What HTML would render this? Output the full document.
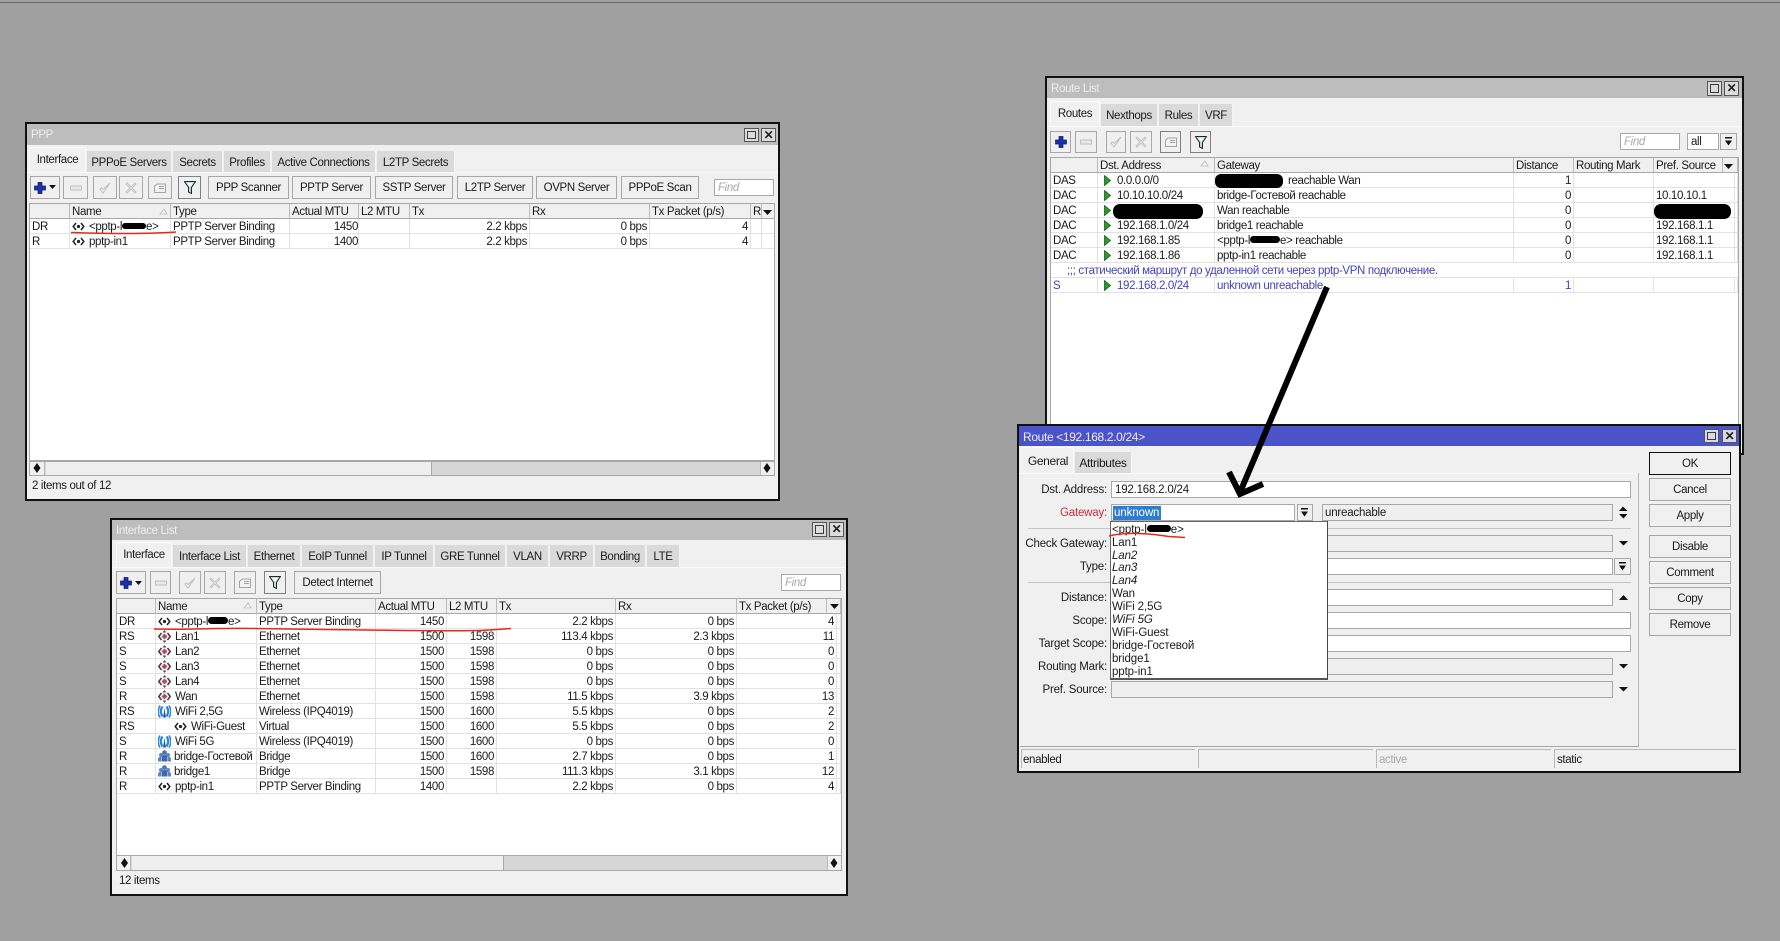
<!DOCTYPE html>
<html lang="en"><head><meta charset="utf-8"><title>MikroTik WinBox</title>
<style>
html,body{margin:0;padding:0;background:#a0a0a0}
#r{position:relative;width:1780px;height:941px;overflow:hidden;background:#a0a0a0;font:11.5px/15px "Liberation Sans","Noto Sans CJK SC",sans-serif;letter-spacing:-.35px;color:#1a1a1a;filter:blur(.3px)}
#r div,#r table{position:absolute;box-sizing:border-box}
.w{background:#f0f0f0;border:2px solid #111}
.tt{background:#bdbdbd;color:#eee;padding-left:4px;line-height:23px}
.tl{white-space:nowrap}
.tb{background:#dadada;text-align:center;white-space:nowrap;line-height:24px;border-right:1px solid #f4f4f4}
.tb.on{background:#f0f0f0;border:1px solid #fafafa;border-bottom:0;line-height:25px}
.b{border:1px solid #a8a8a8;background:#f0f0f0;display:flex;align-items:center;justify-content:center;white-space:nowrap;padding-top:2px}
.b svg{position:relative;top:-1px}
.b.d{border-color:#808080}
.i{border:1px solid #a8a8a8;background:#fff;padding-left:3px;line-height:17px;white-space:nowrap}
.i.g{background:#efefef}
.f{color:#aaa;font-style:italic}
.wb{background:#dcdcdc;border:1px solid #555}
.wb div{border:1.5px solid #3a3a3a}
.l{width:120px;text-align:right;left:987px;white-space:nowrap;letter-spacing:-.2px}
.dd{left:1112px;white-space:nowrap;letter-spacing:-.1px}
.ln{background:#c4c4c4;height:1px}
.fr{background:transparent;border:1px solid #a8a8a8}
table{table-layout:fixed;border-collapse:separate;border-spacing:0;background:#fff}
td,th{box-sizing:border-box;height:15px;padding:3px 2px 0;border-right:1px solid #e2e2e2;border-bottom:1px solid #e2e2e2;font-weight:normal;text-align:left;white-space:nowrap;overflow:hidden;line-height:11px}
td:first-child{padding-left:3px}
th{height:16px;padding-top:3px;background:#f0f0f0;border-right:1px solid #bcbcbc;border-top:1px solid #a8a8a8;border-bottom:1px solid #a8a8a8;line-height:11px}
td.r{text-align:right;padding-right:2px}
td.m{padding-right:0}
.u td{color:#4343bb}
.k{display:inline-block;background:#000;border-radius:4px;height:7px;vertical-align:middle;margin-top:-2px}
svg.n{display:inline-block;vertical-align:5px;margin:-6px 4px -6px 0}
svg.e{vertical-align:3px}
svg.q{vertical-align:4px;margin-right:3px}
svg.g{vertical-align:4px;margin:-6px 6px -6px 4px}
</style></head><body>
<svg width="0" height="0" style="position:absolute"><defs>
<symbol id="plus" viewBox="0 0 12 12"><path d="M4 .5h4v3.500h3.500v4H8v3.500H4V8H.5V4H4z" fill="#1c30a8" stroke="#0c1a6a" stroke-width=".7"/></symbol>
<symbol id="minus" viewBox="0 0 12 12"><rect x=".5" y="4" width="11" height="4" fill="#e8e8e8" stroke="#c0c0c0"/></symbol>
<symbol id="check" viewBox="0 0 12 12"><path d="M1 7l3 4L11 1 4.200 7.500 2.500 5.800z" fill="#f6f6f6" stroke="#c0c0c0"/></symbol>
<symbol id="xx" viewBox="0 0 12 12"><path d="M2 1l4 4 4-4 1 1-4 4 4 4-1 1-4-4-4 4-1-1 4-4-4-4z" fill="#f6f6f6" stroke="#c0c0c0" stroke-width=".9"/></symbol>
<symbol id="note" viewBox="0 0 12 10"><path d="M.5 3.500L3 1h8.500v8.500H.5z" fill="#f2f2f2" stroke="#a4a4a4"/><path d="M5 3.500h5M5 5.500h5" stroke="#a4a4a4"/></symbol>
<symbol id="filt" viewBox="0 0 12 13"><path d="M.5.500h11L7.500 6.500v6l-3-1.500V6.500z" fill="#bfd6da" stroke="#1e2a2e" stroke-width="1"/><path d="M3 2h6L6.500 5.500h-1z" fill="#f6fbfb"/></symbol>
<symbol id="if" viewBox="0 0 13 9"><path d="M4 1L1.200 4.500 4 8M9 1l2.800 3.500L9 8" fill="none" stroke="#222" stroke-width="1.500"/><circle cx="6.500" cy="4.500" r="1.600" fill="#222"/></symbol>
<symbol id="eth" viewBox="0 0 13 13"><path d="M6.500 0l2 2.500h-4zM6.500 13l-2-2.500h4z" fill="#555"/><path d="M3.500 3L.8 6.500 3.500 10M9.500 3l2.700 3.500L9.500 10" fill="none" stroke="#4e3a42" stroke-width="1.600"/><path d="M6.500 3.500l3 3-3 3-3-3z" fill="#b44a68"/></symbol>
<symbol id="wifi" viewBox="0 0 13 13"><path d="M4.500 1.500C2.300 4.500 2.300 8 4.500 11.500M8.500 1.500c2.200 3 2.200 6.500 0 10" fill="none" stroke="#2a86d6" stroke-width="2.200"/><path d="M2 .5C-.4 4.500-.4 8.500 2 12.500M11 .5c2.400 4 2.400 8 0 12" fill="none" stroke="#2a86d6" stroke-width="1.600"/><path d="M6.500 3l1.400 9.500H5.100z" fill="#27559a"/></symbol>
<symbol id="br" viewBox="0 0 13 12"><circle cx="6.500" cy="2.600" r="2.400" fill="#4a74b4"/><circle cx="3" cy="5" r="2" fill="#5c86c4"/><circle cx="10" cy="5" r="2" fill="#5c86c4"/><path d="M3.500 11.500V7.500c0-1.500 1.500-2.500 3-2.500s3 1 3 2.500v4z" fill="#3f69aa"/><path d="M0 11.500V9c0-1.500 1.200-2.300 3-2.300V11.500zM13 11.500V9c0-1.500-1.200-2.300-3-2.300V11.500z" fill="#5c86c4"/></symbol>
<symbol id="ga" viewBox="0 0 7 11"><path d="M.5.500l6 5-6 5z" fill="#2f9a30" stroke="#1b5a20" stroke-width=".8"/></symbol>
</defs></svg>
<div id="r">
<div style="left:0;top:2px;width:1780px;height:1px;background:#666"></div>

<!-- PPP -->
<div class="w" style="left:25px;top:122px;width:755px;height:379px"></div>
<div class="tt" style="left:27px;top:124px;width:751px;height:21px">PPP</div>
<div class="wb" style="left:744px;top:128px;width:15px;height:14px"><div style="left:2px;top:2px;width:9px;height:8px"></div></div>
<div class="wb" style="left:761px;top:128px;width:15px;height:14px;text-align:center;line-height:12px;font-weight:bold;color:#222;font-size:12px">✕</div>
<div class="tb" style="left:87px;top:151px;width:85px;height:21px">PPPoE Servers</div>
<div class="tb" style="left:173px;top:151px;width:50px;height:21px">Secrets</div>
<div class="tb" style="left:224px;top:151px;width:47px;height:21px">Profiles</div>
<div class="tb" style="left:272px;top:151px;width:104px;height:21px">Active Connections</div>
<div class="tb" style="left:377px;top:151px;width:78px;height:21px">L2TP Secrets</div>
<div class="tb on" style="left:29px;top:147px;width:57px;height:25px">Interface</div>
<div class="ln" style="left:27px;top:172px;width:751px;background:#fafafa"></div>
<div class="b" style="left:30px;top:176px;width:30px;height:23px;justify-content:flex-start;padding-left:3px"><svg width="12" height="12"><use href="#plus"/></svg></div>
<div class="b" style="left:63px;top:176px;width:25px;height:23px"><svg width="12" height="12"><use href="#minus"/></svg></div>
<div class="b" style="left:93px;top:176px;width:24px;height:23px"><svg width="12" height="12"><use href="#check"/></svg></div>
<div class="b" style="left:119px;top:176px;width:24px;height:23px"><svg width="12" height="12"><use href="#xx"/></svg></div>
<div class="b" style="left:148px;top:176px;width:24px;height:23px"><svg width="12" height="10"><use href="#note"/></svg></div>
<div class="b d" style="left:178px;top:176px;width:23px;height:23px"><svg width="12" height="13"><use href="#filt"/></svg></div>
<div class="b" style="left:208px;top:176px;width:81px;height:23px">PPP Scanner</div>
<div class="b" style="left:292px;top:176px;width:79px;height:23px">PPTP Server</div>
<div class="b" style="left:375px;top:176px;width:78px;height:23px">SSTP Server</div>
<div class="b" style="left:457px;top:176px;width:76px;height:23px">L2TP Server</div>
<div class="b" style="left:536px;top:176px;width:81px;height:23px">OVPN Server</div>
<div class="b" style="left:621px;top:176px;width:78px;height:23px">PPPoE Scan</div>
<div class="i f" style="left:714px;top:179px;width:60px;height:17px">Find</div>
<div style="left:29px;top:203px;width:746px;height:258px;background:#fff"></div>
<table style="left:29px;top:203px;width:746px"><colgroup><col width="41"><col width="101"><col width="119"><col width="69"><col width="51"><col width="120"><col width="120"><col width="101"><col width="11"><col width="13"></colgroup>
<tr><th></th><th>Name</th><th>Type</th><th>Actual MTU</th><th>L2 MTU</th><th>Tx</th><th>Rx</th><th>Tx Packet (p/s)</th><th>R</th><th></th></tr>
<tr><td>DR</td><td><svg class="n" width="13" height="9"><use href="#if"/></svg>&lt;pptp-l<span class="k" style="width:24px;height:6px"></span>e&gt;</td><td>PPTP Server Binding</td><td class="r m">1450</td><td></td><td class="r">2.2 kbps</td><td class="r">0 bps</td><td class="r">4</td><td></td><td></td></tr>
<tr><td>R</td><td><svg class="n" width="13" height="9"><use href="#if"/></svg>pptp-in1</td><td>PPTP Server Binding</td><td class="r m">1400</td><td></td><td class="r">2.2 kbps</td><td class="r">0 bps</td><td class="r">4</td><td></td><td></td></tr>
</table>
<div class="fr" style="left:29px;top:203px;width:746px;height:258px"></div>
<div style="left:29px;top:461px;width:746px;height:15px;background:#d6d6d6;border:1px solid #a8a8a8"></div>
<div style="left:30px;top:462px;width:15px;height:13px;background:#f0f0f0;border-right:1px solid #bbb"></div>
<div style="left:46px;top:462px;width:386px;height:13px;background:#efefef;border-right:1px solid #aaa"></div>
<div style="left:760px;top:462px;width:14px;height:13px;background:#f0f0f0;border-left:1px solid #bbb"></div>
<div class="tl" style="left:32px;top:478.5px">2 items out of 12</div>

<!-- Interface List -->
<div class="w" style="left:110px;top:518px;width:738px;height:378px"></div>
<div class="tt" style="left:112px;top:520px;width:734px;height:20px">Interface List</div>
<div class="wb" style="left:812px;top:522px;width:15px;height:15px"><div style="left:2px;top:2px;width:9px;height:9px"></div></div>
<div class="wb" style="left:829px;top:522px;width:15px;height:15px;text-align:center;line-height:13px;font-weight:bold;color:#222;font-size:12px">✕</div>
<div class="tb" style="left:173px;top:545px;width:74px;height:22px">Interface List</div>
<div class="tb" style="left:248px;top:545px;width:53px;height:22px">Ethernet</div>
<div class="tb" style="left:302px;top:545px;width:72px;height:22px">EoIP Tunnel</div>
<div class="tb" style="left:375px;top:545px;width:59px;height:22px">IP Tunnel</div>
<div class="tb" style="left:435px;top:545px;width:71px;height:22px">GRE Tunnel</div>
<div class="tb" style="left:507px;top:545px;width:42px;height:22px">VLAN</div>
<div class="tb" style="left:550px;top:545px;width:44px;height:22px">VRRP</div>
<div class="tb" style="left:595px;top:545px;width:51px;height:22px">Bonding</div>
<div class="tb" style="left:647px;top:545px;width:33px;height:22px">LTE</div>
<div class="tb on" style="left:116px;top:542px;width:56px;height:25px">Interface</div>
<div class="ln" style="left:112px;top:567px;width:734px;background:#fafafa"></div>
<div class="b" style="left:116px;top:571px;width:30px;height:23px;justify-content:flex-start;padding-left:3px"><svg width="12" height="12"><use href="#plus"/></svg></div>
<div class="b" style="left:150px;top:571px;width:21px;height:23px"><svg width="12" height="12"><use href="#minus"/></svg></div>
<div class="b" style="left:179px;top:571px;width:22px;height:23px"><svg width="12" height="12"><use href="#check"/></svg></div>
<div class="b" style="left:204px;top:571px;width:22px;height:23px"><svg width="12" height="12"><use href="#xx"/></svg></div>
<div class="b" style="left:234px;top:571px;width:22px;height:23px"><svg width="12" height="10"><use href="#note"/></svg></div>
<div class="b d" style="left:264px;top:571px;width:22px;height:23px"><svg width="12" height="13"><use href="#filt"/></svg></div>
<div class="b" style="left:294px;top:571px;width:87px;height:23px">Detect Internet</div>
<div class="i f" style="left:781px;top:574px;width:60px;height:17px">Find</div>
<div style="left:116px;top:598px;width:726px;height:258px;background:#fff"></div>
<table style="left:116px;top:598px;width:725px"><colgroup><col width="40"><col width="101"><col width="119"><col width="71"><col width="50"><col width="119"><col width="121"><col width="90"><col width="10"><col width="4"></colgroup>
<tr><th></th><th>Name</th><th>Type</th><th>Actual MTU</th><th>L2 MTU</th><th>Tx</th><th>Rx</th><th>Tx Packet (p/s)</th><th colspan="2"></th></tr>
<tr><td>DR</td><td><svg class="n" width="13" height="9"><use href="#if"/></svg>&lt;pptp-l<span class="k" style="width:20px;height:7px"></span>e&gt;</td><td>PPTP Server Binding</td><td class="r">1450</td><td></td><td class="r">2.2 kbps</td><td class="r">0 bps</td><td class="r" colspan="2">4</td><td></td></tr>
<tr><td>RS</td><td><svg class="n e" width="13" height="13"><use href="#eth"/></svg>Lan1</td><td>Ethernet</td><td class="r">1500</td><td class="r">1598</td><td class="r">113.4 kbps</td><td class="r">2.3 kbps</td><td class="r" colspan="2">11</td><td></td></tr>
<tr><td>S</td><td><svg class="n e" width="13" height="13"><use href="#eth"/></svg>Lan2</td><td>Ethernet</td><td class="r">1500</td><td class="r">1598</td><td class="r">0 bps</td><td class="r">0 bps</td><td class="r" colspan="2">0</td><td></td></tr>
<tr><td>S</td><td><svg class="n e" width="13" height="13"><use href="#eth"/></svg>Lan3</td><td>Ethernet</td><td class="r">1500</td><td class="r">1598</td><td class="r">0 bps</td><td class="r">0 bps</td><td class="r" colspan="2">0</td><td></td></tr>
<tr><td>S</td><td><svg class="n e" width="13" height="13"><use href="#eth"/></svg>Lan4</td><td>Ethernet</td><td class="r">1500</td><td class="r">1598</td><td class="r">0 bps</td><td class="r">0 bps</td><td class="r" colspan="2">0</td><td></td></tr>
<tr><td>R</td><td><svg class="n e" width="13" height="13"><use href="#eth"/></svg>Wan</td><td>Ethernet</td><td class="r">1500</td><td class="r">1598</td><td class="r">11.5 kbps</td><td class="r">3.9 kbps</td><td class="r" colspan="2">13</td><td></td></tr>
<tr><td>RS</td><td><svg class="n e" width="13" height="13"><use href="#wifi"/></svg>WiFi 2,5G</td><td>Wireless (IPQ4019)</td><td class="r">1500</td><td class="r">1600</td><td class="r">5.5 kbps</td><td class="r">0 bps</td><td class="r" colspan="2">2</td><td></td></tr>
<tr><td>RS</td><td style="padding-left:18px"><svg class="n" width="13" height="9"><use href="#if"/></svg>WiFi-Guest</td><td>Virtual</td><td class="r">1500</td><td class="r">1600</td><td class="r">5.5 kbps</td><td class="r">0 bps</td><td class="r" colspan="2">2</td><td></td></tr>
<tr><td>S</td><td><svg class="n e" width="13" height="13"><use href="#wifi"/></svg>WiFi 5G</td><td>Wireless (IPQ4019)</td><td class="r">1500</td><td class="r">1600</td><td class="r">0 bps</td><td class="r">0 bps</td><td class="r" colspan="2">0</td><td></td></tr>
<tr><td>R</td><td><svg class="n q" width="13" height="12"><use href="#br"/></svg>bridge-Гостевой</td><td>Bridge</td><td class="r">1500</td><td class="r">1600</td><td class="r">2.7 kbps</td><td class="r">0 bps</td><td class="r" colspan="2">1</td><td></td></tr>
<tr><td>R</td><td><svg class="n q" width="13" height="12"><use href="#br"/></svg>bridge1</td><td>Bridge</td><td class="r">1500</td><td class="r">1598</td><td class="r">111.3 kbps</td><td class="r">3.1 kbps</td><td class="r" colspan="2">12</td><td></td></tr>
<tr><td>R</td><td><svg class="n" width="13" height="9"><use href="#if"/></svg>pptp-in1</td><td>PPTP Server Binding</td><td class="r">1400</td><td></td><td class="r">2.2 kbps</td><td class="r">0 bps</td><td class="r" colspan="2">4</td><td></td></tr>
</table>
<div class="fr" style="left:116px;top:598px;width:726px;height:258px"></div>
<div style="left:116px;top:855px;width:726px;height:16px;background:#d6d6d6;border:1px solid #a8a8a8"></div>
<div style="left:117px;top:856px;width:14px;height:14px;background:#f0f0f0;border-right:1px solid #bbb"></div>
<div style="left:132px;top:856px;width:372px;height:14px;background:#efefef;border-right:1px solid #aaa"></div>
<div style="left:827px;top:856px;width:14px;height:14px;background:#f0f0f0;border-left:1px solid #bbb"></div>
<div class="tl" style="left:119px;top:874px">12 items</div>

<!-- Route List -->
<div class="w" style="left:1045px;top:76px;width:699px;height:379px"></div>
<div class="tt" style="left:1047px;top:78px;width:695px;height:20px">Route List</div>
<div class="wb" style="left:1707px;top:81px;width:15px;height:15px"><div style="left:2px;top:2px;width:9px;height:9px"></div></div>
<div class="wb" style="left:1724px;top:81px;width:15px;height:15px;text-align:center;line-height:13px;font-weight:bold;color:#222;font-size:12px">✕</div>
<div class="tb" style="left:1101px;top:104px;width:57px;height:22px">Nexthops</div>
<div class="tb" style="left:1159px;top:104px;width:40px;height:22px">Rules</div>
<div class="tb" style="left:1200px;top:104px;width:33px;height:22px">VRF</div>
<div class="tb on" style="left:1050px;top:101px;width:50px;height:25px">Routes</div>
<div class="ln" style="left:1047px;top:126px;width:695px;background:#fafafa"></div>
<div class="b" style="left:1050px;top:131px;width:21px;height:22px"><svg width="12" height="12"><use href="#plus"/></svg></div>
<div class="b" style="left:1075px;top:131px;width:22px;height:22px"><svg width="12" height="12"><use href="#minus"/></svg></div>
<div class="b" style="left:1106px;top:131px;width:20px;height:22px"><svg width="12" height="12"><use href="#check"/></svg></div>
<div class="b" style="left:1130px;top:131px;width:22px;height:22px"><svg width="12" height="12"><use href="#xx"/></svg></div>
<div class="b d" style="left:1160px;top:131px;width:21px;height:22px"><svg width="12" height="10"><use href="#note"/></svg></div>
<div class="b d" style="left:1190px;top:131px;width:21px;height:22px"><svg width="12" height="13"><use href="#filt"/></svg></div>
<div class="i f" style="left:1620px;top:133px;width:60px;height:17px">Find</div>
<div class="i" style="left:1687px;top:133px;width:32px;height:17px">all</div>
<div class="b" style="left:1720px;top:133px;width:17px;height:17px"></div>
<div style="left:1050px;top:157px;width:689px;height:290px;background:#fff"></div>
<table style="left:1050px;top:157px;width:688px"><colgroup><col width="48"><col width="117"><col width="299"><col width="60"><col width="80"><col width="69"><col width="12"><col width="3"></colgroup>
<tr><th></th><th>Dst. Address</th><th>Gateway</th><th>Distance</th><th>Routing Mark</th><th>Pref. Source</th><th colspan="2"></th></tr>
<tr><td>DAS</td><td><svg class="g" width="7" height="11"><use href="#ga"/></svg>0.0.0.0/0</td><td style="padding-left:73px">reachable Wan</td><td class="r">1</td><td></td><td colspan="2"></td><td></td></tr>
<tr><td>DAC</td><td><svg class="g" width="7" height="11"><use href="#ga"/></svg>10.10.10.0/24</td><td>bridge-Гостевой reachable</td><td class="r">0</td><td></td><td colspan="2">10.10.10.1</td><td></td></tr>
<tr><td>DAC</td><td><svg class="g" width="7" height="11"><use href="#ga"/></svg></td><td>Wan reachable</td><td class="r">0</td><td></td><td colspan="2"></td><td></td></tr>
<tr><td>DAC</td><td><svg class="g" width="7" height="11"><use href="#ga"/></svg>192.168.1.0/24</td><td>bridge1 reachable</td><td class="r">0</td><td></td><td colspan="2">192.168.1.1</td><td></td></tr>
<tr><td>DAC</td><td><svg class="g" width="7" height="11"><use href="#ga"/></svg>192.168.1.85</td><td>&lt;pptp-l<span class="k" style="width:30px;height:7px"></span>e&gt; reachable</td><td class="r">0</td><td></td><td colspan="2">192.168.1.1</td><td></td></tr>
<tr><td>DAC</td><td><svg class="g" width="7" height="11"><use href="#ga"/></svg>192.168.1.86</td><td>pptp-in1 reachable</td><td class="r">0</td><td></td><td colspan="2">192.168.1.1</td><td></td></tr>
<tr class="u"><td colspan="8" style="padding-left:17px;border-right:0">;;; статический маршрут до удаленной сети через pptp-VPN подключение.</td></tr>
<tr class="u"><td>S</td><td><svg class="g" width="7" height="11"><use href="#ga"/></svg>192.168.2.0/24</td><td>unknown unreachable</td><td class="r">1</td><td></td><td colspan="2"></td><td></td></tr>
</table>
<div class="fr" style="left:1050px;top:157px;width:689px;height:290px"></div>

<!-- Route window -->
<div class="w" style="left:1017px;top:424px;width:724px;height:349px"></div>
<div style="left:1019px;top:426px;width:720px;height:20px;background:#4b53c9;color:#eef;padding-left:4px;line-height:22px;white-space:nowrap;font-size:12px">Route &lt;192.168.2.0/24&gt;</div>
<div class="wb" style="left:1704px;top:429px;width:15px;height:14px;background:#d8d8e4"><div style="left:2px;top:2px;width:9px;height:8px"></div></div>
<div class="wb" style="left:1722px;top:429px;width:15px;height:14px;background:#d8d8e4;text-align:center;line-height:12px;font-weight:bold;color:#222;font-size:12px">✕</div>
<div class="tb" style="left:1075px;top:452px;width:57px;height:21px;font-size:12px;line-height:22px">Attributes</div>
<div class="tb on" style="left:1022px;top:447px;width:52px;height:26px;font-size:12px;line-height:26px">General</div>
<div class="ln" style="left:1019px;top:473px;width:619px;background:#fafafa"></div>
<div style="left:1638px;top:473px;width:1px;height:274px;background:#b8b8b8"></div>
<div class="ln" style="left:1020px;top:746px;width:619px;background:#a8a8a8"></div>

<div class="l" style="top:483px">Dst. Address:</div>
<div class="l" style="top:506px;color:#c4303c">Gateway:</div>
<div class="l" style="top:537px">Check Gateway:</div>
<div class="l" style="top:560px">Type:</div>
<div class="l" style="top:591px">Distance:</div>
<div class="l" style="top:614px">Scope:</div>
<div class="l" style="top:637px">Target Scope:</div>
<div class="l" style="top:660px">Routing Mark:</div>
<div class="l" style="top:683px">Pref. Source:</div>

<div class="i" style="left:1111px;top:481px;width:520px;height:17px;letter-spacing:-.2px">192.168.2.0/24</div>
<div class="i" style="left:1111px;top:504px;width:184px;height:17px;padding-left:1px"><span style="background:#2f7dd0;color:#fff;display:inline-block;padding:0 1px;width:46px;letter-spacing:-.1px;line-height:14px;vertical-align:top;margin-top:1px">unknown</span></div>
<div class="b" style="left:1297px;top:504px;width:16px;height:17px"></div>
<div class="i g" style="left:1322px;top:504px;width:291px;height:17px;padding-left:2px;letter-spacing:-.2px">unreachable</div>
<div class="ln" style="left:1028px;top:528px;width:603px"></div>
<div class="i g" style="left:1111px;top:535px;width:502px;height:17px"></div>
<div class="i" style="left:1111px;top:558px;width:502px;height:17px"></div>
<div class="b" style="left:1614px;top:558px;width:17px;height:17px"></div>
<div class="ln" style="left:1028px;top:582px;width:603px"></div>
<div class="i" style="left:1111px;top:589px;width:502px;height:17px"></div>
<div class="i" style="left:1111px;top:612px;width:520px;height:17px"></div>
<div class="i" style="left:1111px;top:635px;width:520px;height:17px"></div>
<div class="i g" style="left:1111px;top:658px;width:502px;height:17px"></div>
<div class="i g" style="left:1111px;top:681px;width:502px;height:17px"></div>

<div class="b" style="left:1649px;top:452px;width:82px;height:23px;border-color:#111">OK</div>
<div class="b" style="left:1649px;top:478px;width:82px;height:23px">Cancel</div>
<div class="b" style="left:1649px;top:504px;width:82px;height:23px">Apply</div>
<div class="b" style="left:1649px;top:535px;width:82px;height:23px">Disable</div>
<div class="b" style="left:1649px;top:561px;width:82px;height:23px">Comment</div>
<div class="b" style="left:1649px;top:587px;width:82px;height:23px">Copy</div>
<div class="b" style="left:1649px;top:613px;width:82px;height:23px">Remove</div>

<div style="left:1021px;top:749px;width:174px;height:19px;border-top:1px solid #b8b8b8;border-left:1px solid #b8b8b8;padding-left:1px;line-height:21px">enabled</div>
<div style="left:1198px;top:749px;width:175px;height:19px;border-top:1px solid #b8b8b8;border-left:1px solid #b8b8b8"></div>
<div style="left:1376px;top:749px;width:175px;height:19px;border-top:1px solid #b8b8b8;border-left:1px solid #b8b8b8;padding-left:2px;line-height:21px;color:#aaa">active</div>
<div style="left:1554px;top:749px;width:182px;height:19px;border-top:1px solid #b8b8b8;border-left:1px solid #b8b8b8;padding-left:2px;line-height:21px">static</div>

<!-- Dropdown -->
<div style="left:1110px;top:521px;width:218px;height:159px;background:#fff;border:1px solid #666;border-right:1px solid #444;border-bottom:2px solid #555"></div>
<div class="dd" style="top:523px">&lt;pptp-l<span class="k" style="width:24px;height:7px"></span>e&gt;</div>
<div class="dd" style="top:536px">Lan1</div>
<div class="dd" style="top:549px;font-style:italic">Lan2</div>
<div class="dd" style="top:561px;font-style:italic">Lan3</div>
<div class="dd" style="top:574px;font-style:italic">Lan4</div>
<div class="dd" style="top:587px">Wan</div>
<div class="dd" style="top:600px">WiFi 2,5G</div>
<div class="dd" style="top:613px;font-style:italic">WiFi 5G</div>
<div class="dd" style="top:626px">WiFi-Guest</div>
<div class="dd" style="top:639px">bridge-Гостевой</div>
<div class="dd" style="top:652px">bridge1</div>
<div class="dd" style="top:665px">pptp-in1</div>

<!-- overlay -->
<svg width="1780" height="941" style="position:absolute;left:0;top:0">
<g fill="#111">
<path d="M49 185h7l-3.500 4zM135 581h7l-3.500 4zM763 210h9l-4.500 5zM830 604h9l-4.500 5zM1724 164h9l-4.500 5z"/>
<path d="M1619 511l4-4.500 4.500 4.500zM1619 514h8.500l-4 4.500zM1619 541h9l-4.500 4.500zM1619 600l4.500-5 4.500 5zM1619 664h9l-4.500 4.500zM1619 687h9l-4.500 4.500z"/>
<path d="M1301 508h7v1.500h-7zM1301 511.500h7l-3.500 5zM1619 562h7v1.500h-7zM1619 565.500h7l-3.500 5zM1725 137h7v1.500h-7zM1725 140.500h7l-3.500 5z"/>
<path d="M33.500 468l3.500-5 3.500 5-3.500 5zM770.500 468l-3.500-5-3.500 5 3.500 5zM121 863l3.500-5 3.500 5-3.500 5zM837.500 863l-3.500-5-3.500 5 3.500 5z"/>
</g>
<path d="M160 214l4-5 3 5zM244 608l4-5 3 5zM1201 166l4-5 3 5z" fill="#f6f6f6" stroke="#bbb" stroke-width=".8"/>
<rect x="1215" y="174" width="68" height="14" rx="6" fill="#000"/>
<rect x="1113" y="204" width="90" height="15" rx="7" fill="#000"/>
<rect x="1654" y="204" width="77" height="15" rx="7" fill="#000"/>
<g fill="none" stroke="#000" stroke-width="6">
<path d="M1327 287L1241 490"/>
<path d="M1229 472L1240 494L1263 484" stroke-width="6"/>
</g>
<g fill="none" stroke="#e5281e" stroke-width="1.500">
<path d="M71 232.500c30 1 70 2 105-.5"/>
<path d="M154 629c40 1 50-1 100-.5s120 2 150 2 60 1 85-.5l22-1.500"/>
<path d="M1109 536c10-3 30-4 60 .5l16 1"/>
</g>
</svg>
</div>
</body></html>
